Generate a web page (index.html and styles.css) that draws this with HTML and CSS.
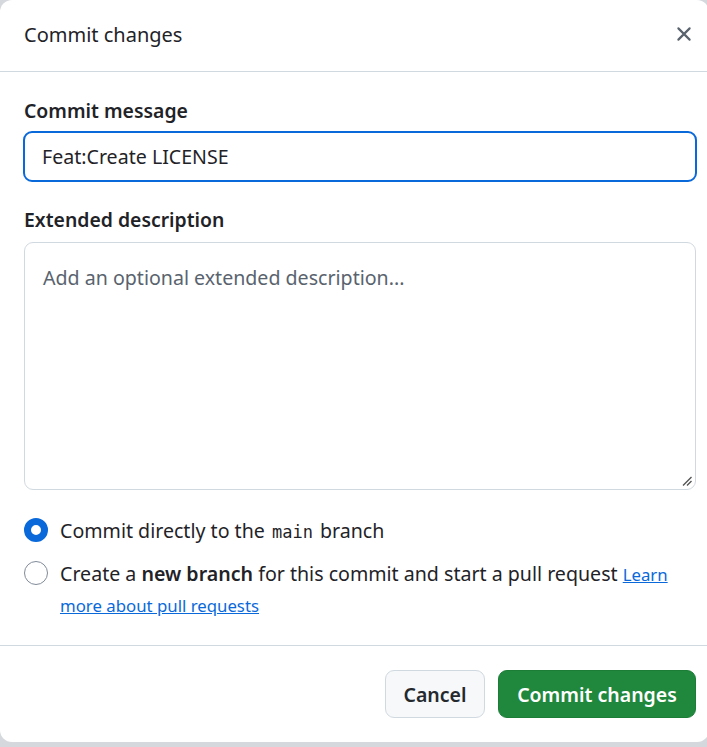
FILE: index.html
```html
<!DOCTYPE html>
<html lang="en">
<head>
<meta charset="utf-8">
<title>Commit changes</title>
<link rel="stylesheet" href="styles.css">
</head>
<body>
<div class="dialog">
  <header class="dialog-header">
    <h1 class="dialog-title">Commit changes</h1>
    <button class="close-btn" aria-label="Close">
      <svg width="16" height="16" viewBox="0 0 16 16"><path d="M3.5 3.5 12.5 12.5M12.5 3.5 3.5 12.5" stroke="#59636e" stroke-width="1.7" stroke-linecap="round" fill="none"/></svg>
    </button>
  </header>
  <div class="dialog-body">
    <label class="field-label">Commit message</label>
    <div class="input focused">Feat:Create LICENSE</div>
    <label class="field-label second">Extended description</label>
    <div class="textarea">
      <span class="placeholder">Add an optional extended description...</span>
      <svg class="grip" width="12" height="12" viewBox="0 0 12 12"><path d="M10.5 2 2 10.5M10.5 6 6 10.5" stroke="#555" stroke-width="1.4" fill="none"/></svg>
    </div>
    <div class="options">
      <div class="option">
        <span class="radio checked"></span>
        <span class="option-text">Commit directly to the <code>main</code> branch</span>
      </div>
      <div class="option">
        <span class="radio"></span>
        <span class="option-text">Create a <strong>new branch</strong> for this commit and start a pull request <a href="#">Learn more about pull requests</a></span>
      </div>
    </div>
  </div>
  <footer class="dialog-footer">
    <button class="btn btn-default">Cancel</button>
    <button class="btn btn-primary">Commit changes</button>
  </footer>
</div>
</body>
</html>
```
FILE: styles.css
```css
html, body {
  margin: 0;
  padding: 0;
  overflow: hidden;
}
body {
  background: #d5d8dc;
  width: 707px;
  height: 747px;
  font-family: "Noto Sans", "Open Sans", sans-serif;
  color: #1f2328;
}
.dialog {
  width: 709px;
  height: 742px;
  background: #ffffff;
  border-radius: 12px;
  display: flex;
  flex-direction: column;
  box-sizing: border-box;
}
.dialog-header {
  height: 72px;
  box-sizing: border-box;
  border-bottom: 1px solid #d1d9e0;
  display: flex;
  align-items: center;
  justify-content: space-between;
  padding: 0 9px 0 24px;
}
.dialog-title {
  margin: 0;
  font-size: 20px;
  font-weight: 400;
  line-height: 30px;
  margin-top: -2px;
}
.close-btn {
  width: 32px;
  height: 32px;
  border: 0;
  background: transparent;
  padding: 0;
  display: flex;
  align-items: center;
  justify-content: center;
  margin-top: -4px;
}
.close-btn svg { width: 20px; height: 20px; }
.dialog-body {
  padding: 24px 13px 0 24px;
  display: flex;
  flex-direction: column;
  height: 574px;
  box-sizing: border-box;
  border-bottom: 1px solid #d1d9e0;
}
.field-label {
  display: block;
  font-size: 19.4px;
  font-weight: 600;
  line-height: 30px;
}
.field-label.second {
  margin-top: 23px;
}
.input {
  margin-top: 5px;
  height: 51px;
  box-sizing: border-box;
  border: 2px solid #0969da;
  border-radius: 9px;
  padding: 0 17px;
  display: flex;
  align-items: center;
  font-size: 19.6px;
  line-height: 30px;
  width: 674px;
  margin-left: -1px;
}
.textarea {
  margin-top: 7px;
  height: 248px;
  box-sizing: border-box;
  border: 1px solid #d1d9e0;
  border-radius: 9px;
  padding: 20px 18px;
  font-size: 19.6px;
  line-height: 30px;
  position: relative;
  width: 672px;
}
.placeholder { color: #59636e; }
.grip {
  position: absolute;
  right: 2px;
  bottom: 2px;
}
.options {
  margin-top: 25px;
  display: flex;
  flex-direction: column;
  gap: 12px;
}
.option {
  display: flex;
  align-items: flex-start;
  gap: 12px;
}
.radio {
  flex: none;
  width: 24px;
  height: 24px;
  box-sizing: border-box;
  border: 1px solid #818b98;
  border-radius: 50%;
  background: #fff;
  margin-top: 3px;
}
.radio.checked {
  border: 7px solid #0969da;
}
.option-text {
  font-size: 19.6px;
  line-height: 31px;
}
.option-text code {
  font-family: "DejaVu Sans Mono", "Liberation Mono", monospace;
  font-size: 17px;
  line-height: 1;
  margin: 0 2px;
}
.option-text strong { font-weight: 600; }
.option-text a {
  color: #0969da;
  text-decoration: underline;
  font-size: 16.8px;
  line-height: 1;
}
.dialog-footer {
  flex: 1;
  display: flex;
  justify-content: flex-end;
  align-items: flex-start;
  gap: 13px;
  padding: 24px 13px 0 24px;
}
.btn {
  height: 48px;
  box-sizing: border-box;
  border-radius: 9px;
  font-family: inherit;
  font-size: 19.5px;
  font-weight: 600;
  padding: 0;
}
.btn-default {
  width: 100px;
  background: #f6f8fa;
  border: 1px solid #d1d9e0;
  color: #25292e;
}
.btn-primary {
  width: 198px;
  background: #1f883d;
  border: 1px solid #1c7d37;
  color: #ffffff;
}
```
